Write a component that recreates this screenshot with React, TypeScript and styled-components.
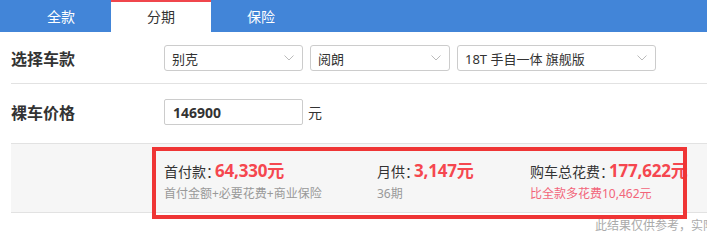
import React, {FC} from "react";
import styled, {createGlobalStyle} from "styled-components";

const blue = '#4285d8'
const red = '#f5474f'
const line = '#e2e2e2'
const labelWidth = 153

const GlobalStyle = createGlobalStyle`
  html, body {
    margin: 0;
    padding: 0;
    background: #fff;
    overflow: hidden;
  }
  body {
    font-family: "Noto Sans", "Noto Sans CJK SC", sans-serif;
    color: #333;
  }
`
const Page = styled.div`
  width: 707px;
  height: 242px;
  overflow: hidden;
`
const TabBar = styled.ul`
  display: flex;
  margin: 0;
  padding: 0 0 0 11px;
  height: 32px;
  background: ${blue};
`
const Tab = styled.li<{ $active?: boolean }>`
  list-style: none;
  width: 100px;
  box-sizing: border-box;
  display: flex;
  align-items: center;
  justify-content: center;
  font-size: 14px;
  color: ${p => p.$active ? '#333' : '#fff'};
  background: ${p => p.$active ? '#fff' : 'transparent'};
  border-top: 2px solid ${p => p.$active ? '#f0464c' : 'transparent'};
  padding-bottom: 2px;
`
const Body = styled.div`
  padding-left: 11px;
`
const Row = styled.div<{ $top: number, $bottom: number }>`
  display: flex;
  align-items: center;
  padding: ${p => p.$top}px 0 ${p => p.$bottom}px;
  border-bottom: 1px solid ${line};
`
const Label = styled.div`
  width: ${labelWidth}px;
  flex-shrink: 0;
  font-size: 16px;
  font-weight: bold;
  color: #333;
  font-family: "Noto Sans CJK SC", sans-serif;
`
const Selects = styled.div`
  display: flex;
  gap: 7px;
`
const Select = styled.div<{ $width: number }>`
  width: ${p => p.$width}px;
  height: 26px;
  box-sizing: border-box;
  border: 1px solid #ccc;
  border-radius: 3px;
  display: flex;
  align-items: center;
  justify-content: space-between;
  padding: 0 8px 0 7px;
  font-size: 13px;
  color: #333;
  background: #fff;
`
const Input = styled.div`
  width: 139px;
  height: 26px;
  box-sizing: border-box;
  border: 1px solid #ccc;
  border-radius: 2px;
  display: flex;
  align-items: center;
  padding-left: 8px;
  font-size: 14px;
  font-weight: bold;
  color: #333;
`
const Unit = styled.span`
  margin-left: 5px;
  font-size: 14px;
  color: #333;
`
const Result = styled.div`
  position: relative;
  display: grid;
  grid-template-columns: 213px 153px 1fr;
  padding: 13px 0 8px ${labelWidth}px;
  background: #f6f6f6;
  border-bottom: 1px solid ${line};
`
const Item = styled.div`
  display: flex;
  flex-direction: column;
`
const Main = styled.div`
  display: flex;
  align-items: baseline;
  height: 27px;
  font-size: 14px;
  color: #333;
  font-feature-settings: "halt";
`
const Value = styled.span`
  margin-left: 2px;
  font-size: 17px;
  font-weight: bold;
  letter-spacing: -0.2px;
  color: ${red};
`
const Note = styled.div<{ $pink?: boolean }>`
  height: 20px;
  line-height: 20px;
  font-size: 12px;
  color: ${p => p.$pink ? '#f2657a' : '#999'};
`
const Highlight = styled.div`
  position: absolute;
  left: 141px;
  top: 3px;
  width: 535px;
  height: 72px;
  box-sizing: border-box;
  border: 4px solid #ef3535;
  pointer-events: none;
`
const Footer = styled.div`
  padding: 3px 0 0 584px;
  font-size: 12px;
  color: #aaa;
  white-space: nowrap;
`

const Chevron: FC = () => (
  <svg width="10" height="6" viewBox="0 0 10 6">
    <path d="M0.5 0.5 L5 5 L9.5 0.5" fill="none" stroke="#bbb" strokeWidth="1" />
  </svg>
)

const selects = [
  {name: '别克', width: 139},
  {name: '阅朗', width: 140},
  {name: '18T 手自一体 旗舰版', width: 199},
]

const App: FC = () => (
  <Page>
    <GlobalStyle />
    <TabBar>
      <Tab>全款</Tab>
      <Tab $active>分期</Tab>
      <Tab>保险</Tab>
    </TabBar>
    <Body>
      <Row $top={13} $bottom={12}>
        <Label>选择车款</Label>
        <Selects>
          {selects.map(s => (
            <Select key={s.name} $width={s.width}>
              {s.name}
              <Chevron />
            </Select>
          ))}
        </Selects>
      </Row>
      <Row $top={15} $bottom={18}>
        <Label>裸车价格</Label>
        <Input>146900</Input>
        <Unit>元</Unit>
      </Row>
      <Result>
        <Item>
          <Main>首付款：<Value>64,330元</Value></Main>
          <Note>首付金额+必要花费+商业保险</Note>
        </Item>
        <Item>
          <Main>月供：<Value>3,147元</Value></Main>
          <Note>36期</Note>
        </Item>
        <Item>
          <Main>购车总花费：<Value>177,622元</Value></Main>
          <Note $pink>比全款多花费10,462元</Note>
        </Item>
        <Highlight />
      </Result>
      <Footer>此结果仅供参考，实际价格以店内报价为准</Footer>
    </Body>
  </Page>
)

export default App
